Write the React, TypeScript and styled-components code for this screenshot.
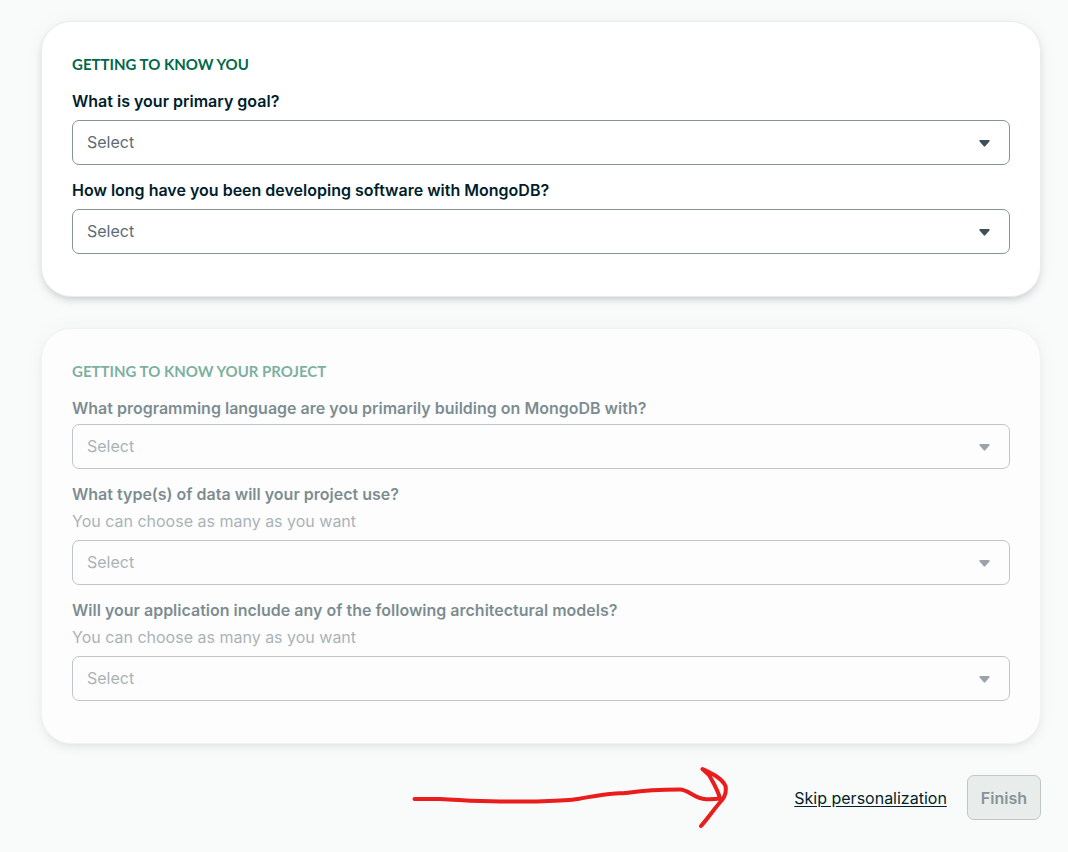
import React, { useId } from "react";
import styled, { createGlobalStyle } from "styled-components";

const GlobalStyle = createGlobalStyle`
  *, *::before, *::after { box-sizing: border-box; }
  body {
    margin: 0;
    background: #f9fbfa;
    color: #001e2b;
    font-family: Inter, "Liberation Sans", sans-serif;
    font-size: 16px;
    line-height: 24px;
  }
`;

const Page = styled.main`
  display: flex;
  flex-direction: column;
  padding: 21px 27px 32px 41px;
`;

const Card = styled.section<{ $inactive?: boolean }>`
  display: flex;
  flex-direction: column;
  gap: 13px;
  margin-bottom: 31px;
  padding: 30px 30px 42px;
  border: 1px solid #e8edeb;
  border-radius: 30px;
  background: #ffffff;
  box-shadow: 0 4px 10px -4px rgba(0, 30, 43, 0.3), 0 0 20px rgba(0, 30, 43, 0.04);
  opacity: ${(p) => (p.$inactive ? 0.5 : 1)};
`;

const Heading = styled.h2`
  margin: 0;
  color: #00684a;
  font-family: Lato, sans-serif;
  font-size: 15px;
  font-weight: 700;
  line-height: 24px;
  text-transform: uppercase;
`;

const FieldBlock = styled.div`
  display: flex;
  flex-direction: column;
`;

const Label = styled.label`
  font-weight: 600;
`;

const Hint = styled.p`
  margin: 3px 0 0;
  color: #5c6c75;
`;

const SelectWrap = styled.div<{ $tight?: boolean }>`
  position: relative;
  margin-top: ${(p) => (p.$tight ? 4 : 7)}px;
`;

const Select = styled.select`
  display: block;
  width: 100%;
  height: 45px;
  padding: 0 40px 2px 14px;
  appearance: none;
  border: 1px solid #889397;
  border-radius: 7px;
  background: transparent;
  color: #5c6c75;
  font-family: inherit;
  font-size: 16px;
  opacity: 1;
`;

const Caret = styled.svg`
  position: absolute;
  top: 20px;
  right: 20px;
  width: 11px;
  height: 7px;
  fill: #3d4f58;
  pointer-events: none;
`;

const Footer = styled.footer`
  position: relative;
  display: flex;
  align-items: center;
  justify-content: flex-end;
  gap: 20px;
`;

const SkipLink = styled.a`
  color: #001e2b;
  text-decoration: underline;
  text-underline-offset: 2px;
`;

const FinishButton = styled.button`
  height: 45px;
  padding: 0 13px;
  border: 1px solid #c1c7c6;
  border-radius: 7px;
  background: #e8edeb;
  color: #889397;
  font-family: inherit;
  font-size: 16px;
  font-weight: 600;
`;

const Arrow = styled.svg`
  position: absolute;
  top: -9px;
  right: 313px;
  width: 318px;
  height: 64px;
  fill: none;
  stroke: #ea1c1c;
  stroke-width: 4;
  stroke-linecap: round;
  stroke-linejoin: round;
  pointer-events: none;
`;

type FieldProps = { label: string; hint?: string; disabled?: boolean; tight?: boolean };

function Field({ label, hint, disabled, tight }: FieldProps) {
  const id = useId();
  return (
    <FieldBlock>
      <Label htmlFor={id}>{label}</Label>
      {hint && <Hint id={`${id}-hint`}>{hint}</Hint>}
      <SelectWrap $tight={tight}>
        <Select id={id} disabled={disabled} aria-describedby={hint ? `${id}-hint` : undefined}>
          <option value="">Select</option>
        </Select>
        <Caret viewBox="0 0 11 7" aria-hidden="true">
          <path d="M1.2 0h8.6c.8 0 1.2.8.6 1.4L6.2 6.3c-.4.5-1 .5-1.4 0L.6 1.4C0 .8.4 0 1.2 0z" />
        </Caret>
      </SelectWrap>
    </FieldBlock>
  );
}

export default function App() {
  const many = "You can choose as many as you want";
  return (
    <>
      <GlobalStyle />
      <Page>
        <Card>
          <Heading>Getting to know you</Heading>
          <Field label="What is your primary goal?" />
          <Field label="How long have you been developing software with MongoDB?" />
        </Card>
        <Card $inactive>
          <Heading>Getting to know your project</Heading>
          <Field label="What programming language are you primarily building on MongoDB with?" disabled tight />
          <Field label="What type(s) of data will your project use?" hint={many} disabled />
          <Field label="Will your application include any of the following architectural models?" hint={many} disabled />
        </Card>
        <Footer>
          <Arrow viewBox="410 766 318 64" aria-hidden="true">
            <path d="M414.500 799H440C462 800 475 801.500 500 801.500H537C556 800.800 568 800.500 578 799C590 797 600 794.500 612 793.700C618 793 624 793.800 630 792.500C646 790 656 789.500 680 789.500C689 789.500 694 799 706 799.200C712 799.500 717 799 720 798.500C718 790 713 782 709 775L702.500 769C711 773 722 778 725.500 786C726.500 791 725 797 722 800C714 809 709 817 701 826" />
          </Arrow>
          <SkipLink href="#skip">Skip personalization</SkipLink>
          <FinishButton type="button" disabled>Finish</FinishButton>
        </Footer>
      </Page>
    </>
  );
}
